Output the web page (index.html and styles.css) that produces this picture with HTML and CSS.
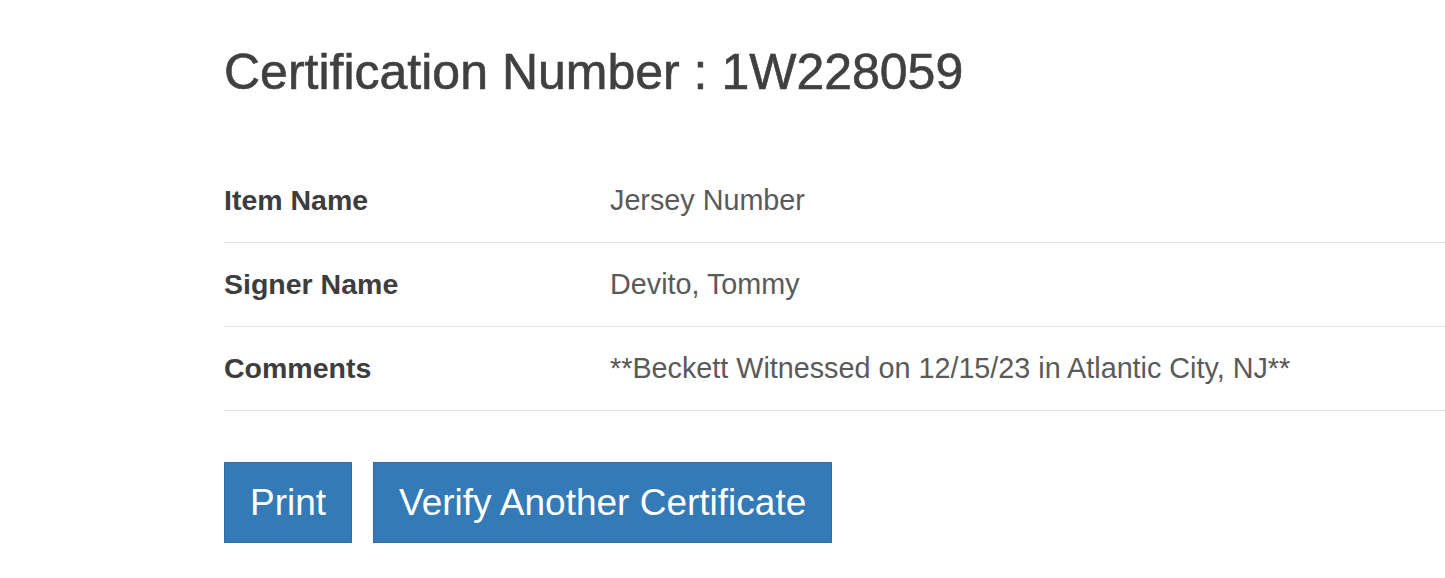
FILE: index.html
```html
<!DOCTYPE html>
<html lang="en">
<head>
<meta charset="utf-8">
<title>Certification Number : 1W228059</title>
<link rel="stylesheet" href="styles.css">
</head>
<body>
<main class="cert">
  <h1 class="cert-title">Certification Number : 1W228059</h1>
  <div class="cert-table">
    <div class="cert-row">
      <div class="cert-label">Item Name</div>
      <div class="cert-value">Jersey Number</div>
    </div>
    <div class="cert-row">
      <div class="cert-label">Signer Name</div>
      <div class="cert-value">Devito, Tommy</div>
    </div>
    <div class="cert-row">
      <div class="cert-label">Comments</div>
      <div class="cert-value">**Beckett Witnessed on 12/15/23 in Atlantic City, NJ**</div>
    </div>
  </div>
  <div class="cert-actions">
    <button class="btn" type="button">Print</button>
    <button class="btn" type="button">Verify Another Certificate</button>
  </div>
</main>
</body>
</html>
```
FILE: styles.css
```css
html, body {
  margin: 0;
  padding: 0;
  background: #ffffff;
}

body {
  font-family: "Liberation Sans", Arial, Helvetica, sans-serif;
  color: #555555;
}

.cert {
  padding: 45px 0 0 224px;
}

.cert-title {
  margin: 0;
  font-size: 50px;
  line-height: 55px;
  font-weight: normal;
  color: #404040;
  -webkit-text-stroke: 0.6px #404040;
}

.cert-table {
  margin-top: 59px;
  display: flex;
  flex-direction: column;
}

.cert-row {
  display: grid;
  grid-template-columns: 386px 1fr;
  border-bottom: 1px solid #e2e2e2;
  padding: 22px 0;
  line-height: 39px;
}

.cert-label {
  font-size: 28.5px;
  font-weight: bold;
  color: #3d3d3d;
}

.cert-value {
  font-size: 28.75px;
  color: #5a5a5a;
}

.cert-actions {
  margin-top: 51px;
  display: flex;
  gap: 21px;
}

.btn {
  font-family: "Liberation Sans", Arial, Helvetica, sans-serif;
  font-size: 37px;
  line-height: 79px;
  padding: 0 25px;
  color: #ffffff;
  background: #337ab7;
  border: 1px solid #2e6da4;
  border-radius: 0;
  cursor: pointer;
}
```
